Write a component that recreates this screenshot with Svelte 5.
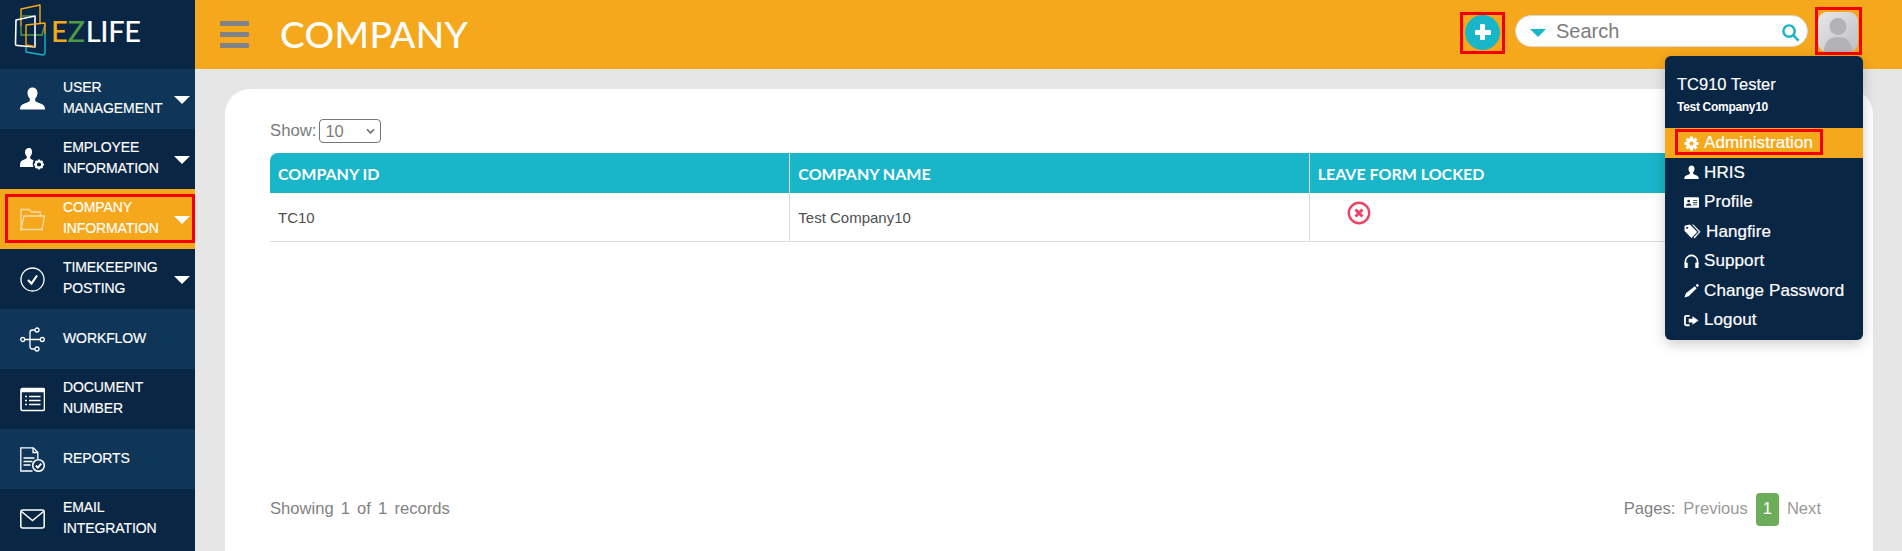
<script>
  const nav = [
    { id: 'user', lines: ['USER', 'MANAGEMENT'], caret: true },
    { id: 'emp', lines: ['EMPLOYEE', 'INFORMATION'], caret: true },
    { id: 'company', lines: ['COMPANY', 'INFORMATION'], caret: true, active: true },
    { id: 'time', lines: ['TIMEKEEPING', 'POSTING'], caret: true },
    { id: 'flow', lines: ['WORKFLOW'] },
    { id: 'doc', lines: ['DOCUMENT', 'NUMBER'] },
    { id: 'rep', lines: ['REPORTS'] },
    { id: 'mail', lines: ['EMAIL', 'INTEGRATION'] }
  ];
  const menu = [
    { id: 'hris', label: 'HRIS' },
    { id: 'profile', label: 'Profile' },
    { id: 'tags', label: 'Hangfire' },
    { id: 'support', label: 'Support' },
    { id: 'pen', label: 'Change Password' },
    { id: 'logout', label: 'Logout' }
  ];
</script>

{#snippet navIcon(id)}
  <svg class="nav-icon" viewBox="0 0 25 25" fill="none" stroke="currentColor" stroke-width="1.300">
    {#if id === 'user'}
      <path stroke="none" fill="currentColor" d="M12.500 0.500c-3.200 0-5 2.400-5 5.500 0 2.400 1.100 4.500 2.300 5.600v2c0 1.300-3.500 2.200-6.300 3.400C1.200 17.800 0 19.500 0 22.500h25c0-3-1.200-4.700-3.500-5.500-2.800-1.200-6.300-2.100-6.300-3.400v-2c1.200-1.100 2.300-3.200 2.300-5.600 0-3.100-1.800-5.500-5-5.500z"/>
    {:else if id === 'emp'}
      <g stroke="none" fill="currentColor">
        <path d="M9 1c-2.600 0-4 1.900-4 4.300 0 1.800.8 3.400 1.800 4.300v1.200c0 .9-2.600 1.700-4.600 2.600C.6 14.100 0 15.500 0 20h13.500a7 7 0 0 1 0-6.500c-.8-.6-2.300-1.300-2.700-1.500-.4-.4-.6-.9-.6-1.300V9.600c1-.9 1.800-2.500 1.800-4.300C12 2.900 11.600 1 9 1z"/>
      </g>
      <circle cx="19" cy="17.500" r="3.200" stroke-width="2.200"/>
      <path stroke-width="1.800" d="M19 12.500v2M19 20.500v2M14 17.500h2M22 17.500h2M15.500 14l1.400 1.400M21.100 19.600l1.400 1.400M15.500 21l1.400-1.400M21.100 15.400l1.400-1.400"/>
    {:else if id === 'company'}
      <path d="M1 22.500V2.500h8l2.500 2.500H20l.5 4" />
      <path d="M1 22.500l3-13.500h20.500L22 22.500z" />
    {:else if id === 'time'}
      <circle cx="12.500" cy="12.500" r="11.500"/>
      <path stroke-width="2.200" d="M8 13l3.500 3.500L17 8.500"/>
    {:else if id === 'flow'}
      <circle cx="2.700" cy="12.500" r="2"/><circle cx="22.300" cy="12.500" r="2"/>
      <circle cx="17" cy="3" r="2"/><circle cx="17" cy="22" r="2"/>
      <path d="M4.700 12.500h15.600M15 3h-2.500c-1.500 0-2.500 1-2.500 2.500v14c0 1.500 1 2.500 2.500 2.500H15"/>
    {:else if id === 'doc'}
      <rect x="1" y="1.500" width="23.500" height="22" rx="1.500" stroke-width="1.600"/>
      <path stroke-width="3.500" d="M1 3.500h23.500"/>
      <path stroke-width="1.700" d="M5 9.500h2M9 9.500h11.500M5 13.500h2M9 13.500h11.500M5 17.500h2M9 17.500h11.500"/>
    {:else if id === 'rep'}
      <path d="M12.500 24H.8V.8h12.500l4.500 4.500v7"/>
      <path d="M13 1v4.500h4.500M3.500 11h11M3.500 14.500h9M3.500 18h7"/>
      <circle cx="18.500" cy="18.500" r="5.800" stroke-width="1.500"/>
      <path stroke-width="1.800" d="M15.800 18.700l2 2 3.500-4"/>
    {:else if id === 'mail'}
      <rect x="0.800" y="3" width="23.400" height="18" rx="2" stroke-width="1.500"/>
      <path stroke-width="1.500" d="M1.500 4.500l11 9 11-9"/>
    {/if}
  </svg>
{/snippet}

{#snippet menuIcon(id)}
  <svg class="menu-icon" class:wide={id === 'tags'} viewBox="0 0 16 16" fill="currentColor">
    {#if id === 'hris'}
      <path d="M8 0.500C6 0.500 4.800 2 4.800 4.200c0 1.500.7 3 1.500 3.700v1.200c0 .8-2.100 1.400-3.900 2.200C1 12 0.300 13 0.300 15h15.400c0-2-.7-3-2.100-3.700-1.800-.8-3.900-1.400-3.900-2.200V7.900c.8-.7 1.500-2.200 1.500-3.700C11.200 2 10 .5 8 .5z"/>
    {:else if id === 'profile'}
      <path fill-rule="evenodd" d="M1 2.500h14a1 1 0 0 1 1 1v9a1 1 0 0 1-1 1H1a1 1 0 0 1-1-1v-9a1 1 0 0 1 1-1zM5 5a1.500 1.500 0 1 0 0 3 1.500 1.500 0 0 0 0-3zM2 11.500h6c0-1.500-1-2.500-3-2.500s-3 1-3 2.500zM9.500 5.500v1H14v-1zM9.500 7.800v1H14v-1zM9.500 10v1H14v-1z"/>
    {:else if id === 'tags'}
      <path fill-rule="evenodd" d="M0.500 2.500L5.500 1.500 12.500 8.500 7 14 .5 7.500zM3 3.500a1 1 0 1 0 .01 0z"/>
      <path d="M7.500 1.500h1.300L15.500 8.300 10 14.500l-1-1 5-5z"/>
    {:else if id === 'support'}
      <path fill="none" stroke="currentColor" stroke-width="1.700" d="M1.500 11V8a6.500 6.500 0 0 1 13 0v3"/>
      <rect x="0.500" y="9" width="3.500" height="6" rx="1"/><rect x="12" y="9" width="3.500" height="6" rx="1"/>
    {:else if id === 'pen'}
      <path d="M11.500 3.500l2 2L5 14l-4.500 1.500L2 11zM12.500 2.500l1.500-1.800 2 2-1.800 1.800z"/>
    {:else if id === 'logout'}
      <path d="M9 3.500L15.500 8 9 12.500V10H5V6h4z"/>
      <path fill="none" stroke="currentColor" stroke-width="2" d="M6 3H2.500A1.500 1.500 0 0 0 1 4.500v7A1.500 1.500 0 0 0 2.500 13H6"/>
    {/if}
  </svg>
{/snippet}

<div class="page">
  <aside class="sidebar">
    <div class="brand">
      <svg class="logo" viewBox="14 4 32 52" fill="none" stroke-width="1.400" stroke-linejoin="round">
        <path stroke="#f6a81c" d="M21 26V9l19-4v19" />
        <path stroke="#4f9a48" d="M21 26v9h21l3-11" />
        <path stroke="#4f9a48" d="M21 16h12" />
        <path stroke="#fff" stroke-width="1.600" d="M16 20l19-4v31l-18-1.500c-1 0-1.500-.6-1.500-1.500z"/>
        <path stroke="#f6a81c" d="M26 45V25l19-2v11" />
        <path stroke="#f6a81c" d="M26 45l9 1.500" />
        <path stroke="#19b5c9" d="M26 47v5l17 3 2-1.500V34" />
      </svg>
      <span class="wordmark"><span class="e">E</span><span class="z">Z</span>LIFE</span>
    </div>
    <nav class="nav">
      {#each nav as item, i}
        <div class="nav-item" class:alt={i % 2 === 0} class:active={item.active}>
          {#if item.active}<span class="mark mark-nav"></span>{/if}
          <span class="nav-icon-wrap">{@render navIcon(item.id)}</span>
          <span class="nav-label">
            {#each item.lines as line}<span>{line}</span>{/each}
          </span>
          {#if item.caret}<span class="nav-caret"></span>{/if}
        </div>
      {/each}
    </nav>
  </aside>

  <div class="main">
    <header class="topbar">
      <div class="burger"><span></span><span></span><span></span></div>
      <h1>COMPANY</h1>
      <div class="top-tools">
        <div class="add-wrap">
          <span class="mark mark-add"></span>
          <button class="add" aria-label="Add"><span class="plus-h"></span><span class="plus-v"></span></button>
        </div>
        <div class="search">
          <span class="search-caret"></span>
          <span class="search-text">Search</span>
          <svg class="search-icon" viewBox="0 0 20 20" fill="none" stroke="#19b5c9" stroke-width="2.600">
            <circle cx="8.500" cy="8.500" r="6"/><path d="M13 13l5.500 5.500"/>
          </svg>
        </div>
        <div class="avatar-wrap">
          <span class="mark mark-avatar"></span>
          <div class="avatar">
            <svg viewBox="0 0 40 40"><circle cx="20" cy="14.500" r="8.500" fill="#b3b3b7"/><path d="M6 40c0-10 5-15 14-15s14 5 14 15z" fill="#b3b3b7"/></svg>
          </div>
        </div>
      </div>
    </header>

    <div class="content">
      <section class="card">
        <div class="show">
          <span>Show:</span>
          <span class="select">10<svg viewBox="0 0 10 6" fill="none" stroke="#6f6f6f" stroke-width="1.800"><path d="M1 1l4 4 4-4"/></svg></span>
        </div>
        <table>
          <thead>
            <tr><th>COMPANY ID</th><th>COMPANY NAME</th><th>LEAVE FORM LOCKED</th></tr>
          </thead>
          <tbody>
            <tr>
              <td>TC10</td>
              <td>Test Company10</td>
              <td>
                <svg class="cross" viewBox="0 0 24 24" fill="none" stroke="#ee4266">
                  <circle cx="12" cy="12" r="10.200" stroke-width="2.400"/>
                  <path stroke-width="3" d="M8.500 8.500l7 7M15.500 8.500l-7 7"/>
                </svg>
              </td>
            </tr>
          </tbody>
        </table>
        <footer class="foot">
          <span class="count">Showing 1 of 1 records</span>
          <span class="pager">
            <span class="pages">Pages:</span>
            <span class="muted">Previous</span>
            <span class="num">1</span>
            <span class="muted">Next</span>
          </span>
        </footer>
      </section>

      <div class="dropdown">
        <div class="who">
          <div class="name">TC910 Tester</div>
          <div class="org">Test Company10</div>
        </div>
        <div class="menu-row current">
          <span class="mark mark-admin"></span>
          <svg class="menu-icon gear" viewBox="0 0 16 16" fill="#fff">
            {#each [0, 45, 90, 135] as a}
              <rect x="6.300" y="0.500" width="3.400" height="15" rx="0.500" transform="rotate({a} 8 8)"/>
            {/each}
            <circle cx="8" cy="8" r="5.300"/>
            <circle cx="8" cy="8" r="2.200" fill="#f6a81c"/>
          </svg>
          <span>Administration</span>
        </div>
        {#each menu as m}
          <div class="menu-row">
            {@render menuIcon(m.id)}
            <span>{m.label}</span>
          </div>
        {/each}
      </div>
    </div>
  </div>
</div>

<style>
  :global(body) { margin: 0; background: #e6e6e6; }
  .page {
    display: grid;
    grid-template-columns: 195px 1fr;
    height: 551px;
    overflow: hidden;
    font-family: "Liberation Sans", Arial, sans-serif;
  }
  .sidebar { background: #0a2645; color: #fff; }
  .brand { height: 69px; display: flex; align-items: flex-start; padding: 4px 0 0 14px; box-sizing: border-box; }
  .logo { width: 32px; height: 52px; flex: none; }
  .wordmark {
    font-family: Lato, sans-serif;
    font-weight: 500;
    font-size: 29px;
    line-height: 30px;
    margin: 12px 0 0 5px;
    letter-spacing: -0.3px;
    color: #fff;
  }
  .e { color: #f6a81c; }
  .z { color: #4f9a48; margin-right: 1px; }
  .nav-item {
    height: 60px;
    position: relative;
    display: flex;
    align-items: center;
    background: #0a2645;
  }
  .nav-item.alt { background: #0f3558; }
  .nav-item.active { background: #f6a81c; }
  .nav-icon-wrap { width: 63px; padding-left: 20px; box-sizing: border-box; flex: none; display: flex; }
  .nav-icon { width: 25px; height: 25px; color: #fff; }
  .active .nav-icon { color: #f7dcae; }
  .nav-label {
    display: flex; flex-direction: column;
    font-size: 14px;
    line-height: 21px;
    letter-spacing: -0.1px;
    color: #fff;
    margin-top: -2px;
    -webkit-text-stroke: 0.15px #fff;
  }
  .nav-caret {
    position: absolute;
    left: 174px;
    top: 27px;
    border-left: 8px solid transparent;
    border-right: 8px solid transparent;
    border-top: 8px solid #fff;
  }
  .mark { position: absolute; border: 3px solid #f40000; box-sizing: border-box; pointer-events: none; }
  .mark-nav { left: 5px; top: 5px; width: 190px; height: 49px; }

  .main { display: flex; flex-direction: column; min-width: 0; }
  .topbar {
    height: 69px;
    flex: none;
    background: #f6a81c;
    display: flex;
    align-items: center;
    padding-left: 25px;
  }
  .burger { display: flex; flex-direction: column; gap: 6px; width: 29px; }
  .burger span { height: 5px; background: #7f8389; border-radius: 1px; }
  h1 {
    margin: -2px 0 0 31px;
    font-family: Lato, sans-serif;
    font-weight: 500;
    font-size: 37px;
    line-height: 40px;
    letter-spacing: 0.35px;
    color: #fff;
  }
  .top-tools { margin-left: auto; margin-top: -5px; display: flex; align-items: center; padding-right: 44px; }
  .add-wrap { position: relative; width: 35px; height: 35px; margin-right: 15px; }
  .mark-add { left: -5px; top: -3px; width: 45px; height: 42px; }
  .add { position: relative; display: block; width: 35px; height: 35px; padding: 0; border: 0; border-radius: 50%; background: #19b5c9; }
  .plus-h, .plus-v { position: absolute; background: #fff; border-radius: 1px; }
  .plus-h { left: 9.500px; top: 15px; width: 16px; height: 5px; }
  .plus-v { left: 15px; top: 9.500px; width: 5px; height: 16px; }
  .search {
    width: 293px; height: 32px;
    box-sizing: border-box;
    background: #fff;
    border: 1px solid #d8d8d8;
    border-radius: 16px;
    display: flex; align-items: center;
    padding: 0 7px 0 14px;
    margin: -2px 10px 0 0;
  }
  .search-caret { border-left: 8px solid transparent; border-right: 8px solid transparent; border-top: 8px solid #19b5c9; margin-top: 3px; }
  .search-text { margin-left: 10px; font-size: 20px; color: #7d7d7d; flex: 1; }
  .search-icon { width: 19px; height: 19px; margin-top: 3px; }
  .avatar-wrap { position: relative; width: 40px; height: 40px; }
  .mark-avatar { left: -3px; top: -5px; width: 47px; height: 48px; }
  .avatar { width: 40px; height: 40px; border-radius: 9px; overflow: hidden; background: linear-gradient(135deg, #e8e8ea, #bfbfc2); }
  .avatar svg { display: block; width: 40px; height: 40px; }

  .content { position: relative; flex: 1; min-height: 0; padding: 20px 29px 0 30px; }
  .card {
    box-sizing: border-box;
    height: 462px;
    background: #fff;
    border-radius: 25px 25px 0 0;
    padding: 30px 45px 0;
    color: #6f6f6f;
    font-size: 15px;
    display: flex;
    flex-direction: column;
  }
  .show { display: flex; align-items: center; gap: 3px; height: 24px; font-size: 16.700px; color: #7b7b7b; }
  .select {
    width: 62px; height: 24px;
    box-sizing: border-box;
    border: 1px solid #767676;
    border-radius: 4px;
    padding: 0 5px;
    display: flex; align-items: center; justify-content: space-between;
    font-size: 16.500px;
    line-height: 1;
  }
  .select svg { width: 9px; height: 6px; }
  table { width: 100%; margin-top: 10px; border-collapse: separate; border-spacing: 0; table-layout: fixed; }
  th {
    height: 40px;
    padding: 0 0 0 8px;
    background: #19b5c9;
    color: #fff;
    text-align: left;
    font-family: Lato, sans-serif;
    font-weight: 700;
    font-size: 16px;
    border-left: 1px solid #e0d8cc;
    box-sizing: border-box;
  }
  th:first-child { border-left: 0; border-top-left-radius: 8px; }
  th:last-child { border-top-right-radius: 8px; }
  td {
    height: 49px;
    box-sizing: border-box;
    padding: 0 0 0 8px;
    font-size: 15px;
    color: #505050;
    border-bottom: 1px solid #dcdcdc;
    border-left: 1px solid #dcdcdc;
  }
  td:first-child { border-left: 0; }
  .cross { display: block; width: 24px; height: 24px; margin: -8px 0 0 29px; }
  .foot {
    margin-top: auto;
    height: 34px;
    margin-bottom: 25px;
    display: flex; align-items: center; justify-content: space-between;
    font-size: 16.600px;
    color: #828282;
  }
  .count { word-spacing: 2.500px; }
  .pager { display: flex; align-items: center; gap: 8px; padding-right: 7px; }
  .muted { color: #9a9a9a; }
  .num {
    width: 23px; height: 33px;
    display: flex; align-items: center; justify-content: center;
    border-radius: 4px;
    background: #6dad5a;
    color: #fff;
  }

  .dropdown {
    position: absolute;
    left: 1470px;
    top: -13px;
    width: 198px;
    height: 284px;
    background: #0a2645;
    color: #fff;
    border-radius: 6px;
    box-shadow: 0 4px 14px rgba(0, 0, 0, 0.2);
  }
  .who { height: 72px; box-sizing: border-box; padding: 18px 12px 0; }
  .name { font-size: 16.500px; line-height: 20px; -webkit-text-stroke: 0.15px #fff; }
  .org { font-size: 12px; font-weight: 700; line-height: 16px; margin-top: 5px; letter-spacing: -0.3px; }
  .menu-row {
    position: relative;
    height: 29.500px;
    display: flex; align-items: center; gap: 5px;
    padding-left: 19px;
    font-size: 17px;
    letter-spacing: 0.1px;
    -webkit-text-stroke: 0.2px #fff;
  }
  .menu-row.current { background: #f6a81c; height: 30px; }
  .menu-icon { width: 15px; height: 15px; flex: none; color: #fff; }
  .menu-icon.wide { width: 17px; height: 17px; }
  .mark-admin { left: 10px; top: 1px; width: 148px; height: 26px; }
</style>
